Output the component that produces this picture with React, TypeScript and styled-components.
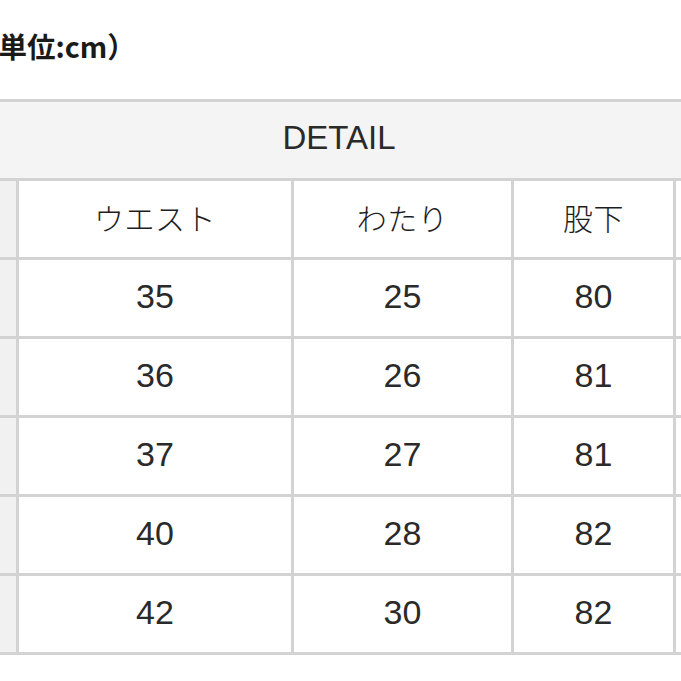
import React from "react";
import styled, { createGlobalStyle } from "styled-components";

const Global = createGlobalStyle`
  html, body {
    margin: 0;
    padding: 0;
    background: #ffffff;
    overflow: hidden;
  }
  body {
    font-family: "Liberation Sans", "Noto Sans CJK JP", sans-serif;
    color: #222222;
  }
`;

const Page = styled.div`
  width: 681px;
  height: 681px;
  overflow: hidden;
  display: flex;
  flex-direction: column;
`;

const Caption = styled.div`
  margin-left: -30px;
  height: 99px;
  padding-top: 27px;
  box-sizing: border-box;
  font-family: "Noto Sans CJK JP", sans-serif;
  font-weight: 700;
  font-size: 28.5px;
  line-height: 38px;
  color: #1a1a1a;
  white-space: nowrap;
`;

const Table = styled.div`
  margin-left: -103px;
  width: 884px;
  display: grid;
  grid-template-columns: 116px 272px 217px 159px 102px;
  grid-auto-rows: 76px;
  gap: 3px;
  padding: 3px;
  background: #d3d3d3;
`;

const Cell = styled.div<{ $tone?: "head" | "side" | "plain"; $span?: number }>`
  grid-column: span ${(p) => p.$span ?? 1};
  display: flex;
  align-items: center;
  justify-content: center;
  box-sizing: border-box;
  padding-bottom: 4px;
  background: ${(p) =>
    p.$tone === "head" ? "#f4f4f4" : p.$tone === "side" ? "#f1f1f1" : "#ffffff"};
  font-family: "Liberation Sans", "Noto Sans CJK JP", sans-serif;
  font-weight: 400;
  font-size: ${(p) => (p.$tone === "head" ? "33px" : "34px")};
  color: #2a2a2a;
`;

const JpLabel = styled.span`
  font-family: "Noto Sans CJK JP", sans-serif;
  font-size: 30px;
  font-weight: 300;
  letter-spacing: 0.5px;
  color: #1e1e1e;
`;

const headers = ["ウエスト", "わたり", "股下"];
const rows = [
  [35, 25, 80],
  [36, 26, 81],
  [37, 27, 81],
  [40, 28, 82],
  [42, 30, 82],
];

export default function App() {
  return (
    <>
      <Global />
      <Page>
        <Caption>（単位:cm）</Caption>
        <Table>
          <Cell $tone="head" $span={5}>DETAIL</Cell>
          <Cell $tone="side" />
          {headers.map((h) => (
            <Cell key={h}>
              <JpLabel>{h}</JpLabel>
            </Cell>
          ))}
          <Cell />
          {rows.map((r, i) => (
            <React.Fragment key={i}>
              <Cell $tone="side" />
              {r.map((v, j) => (
                <Cell key={j}>{v}</Cell>
              ))}
              <Cell />
            </React.Fragment>
          ))}
        </Table>
      </Page>
    </>
  );
}
